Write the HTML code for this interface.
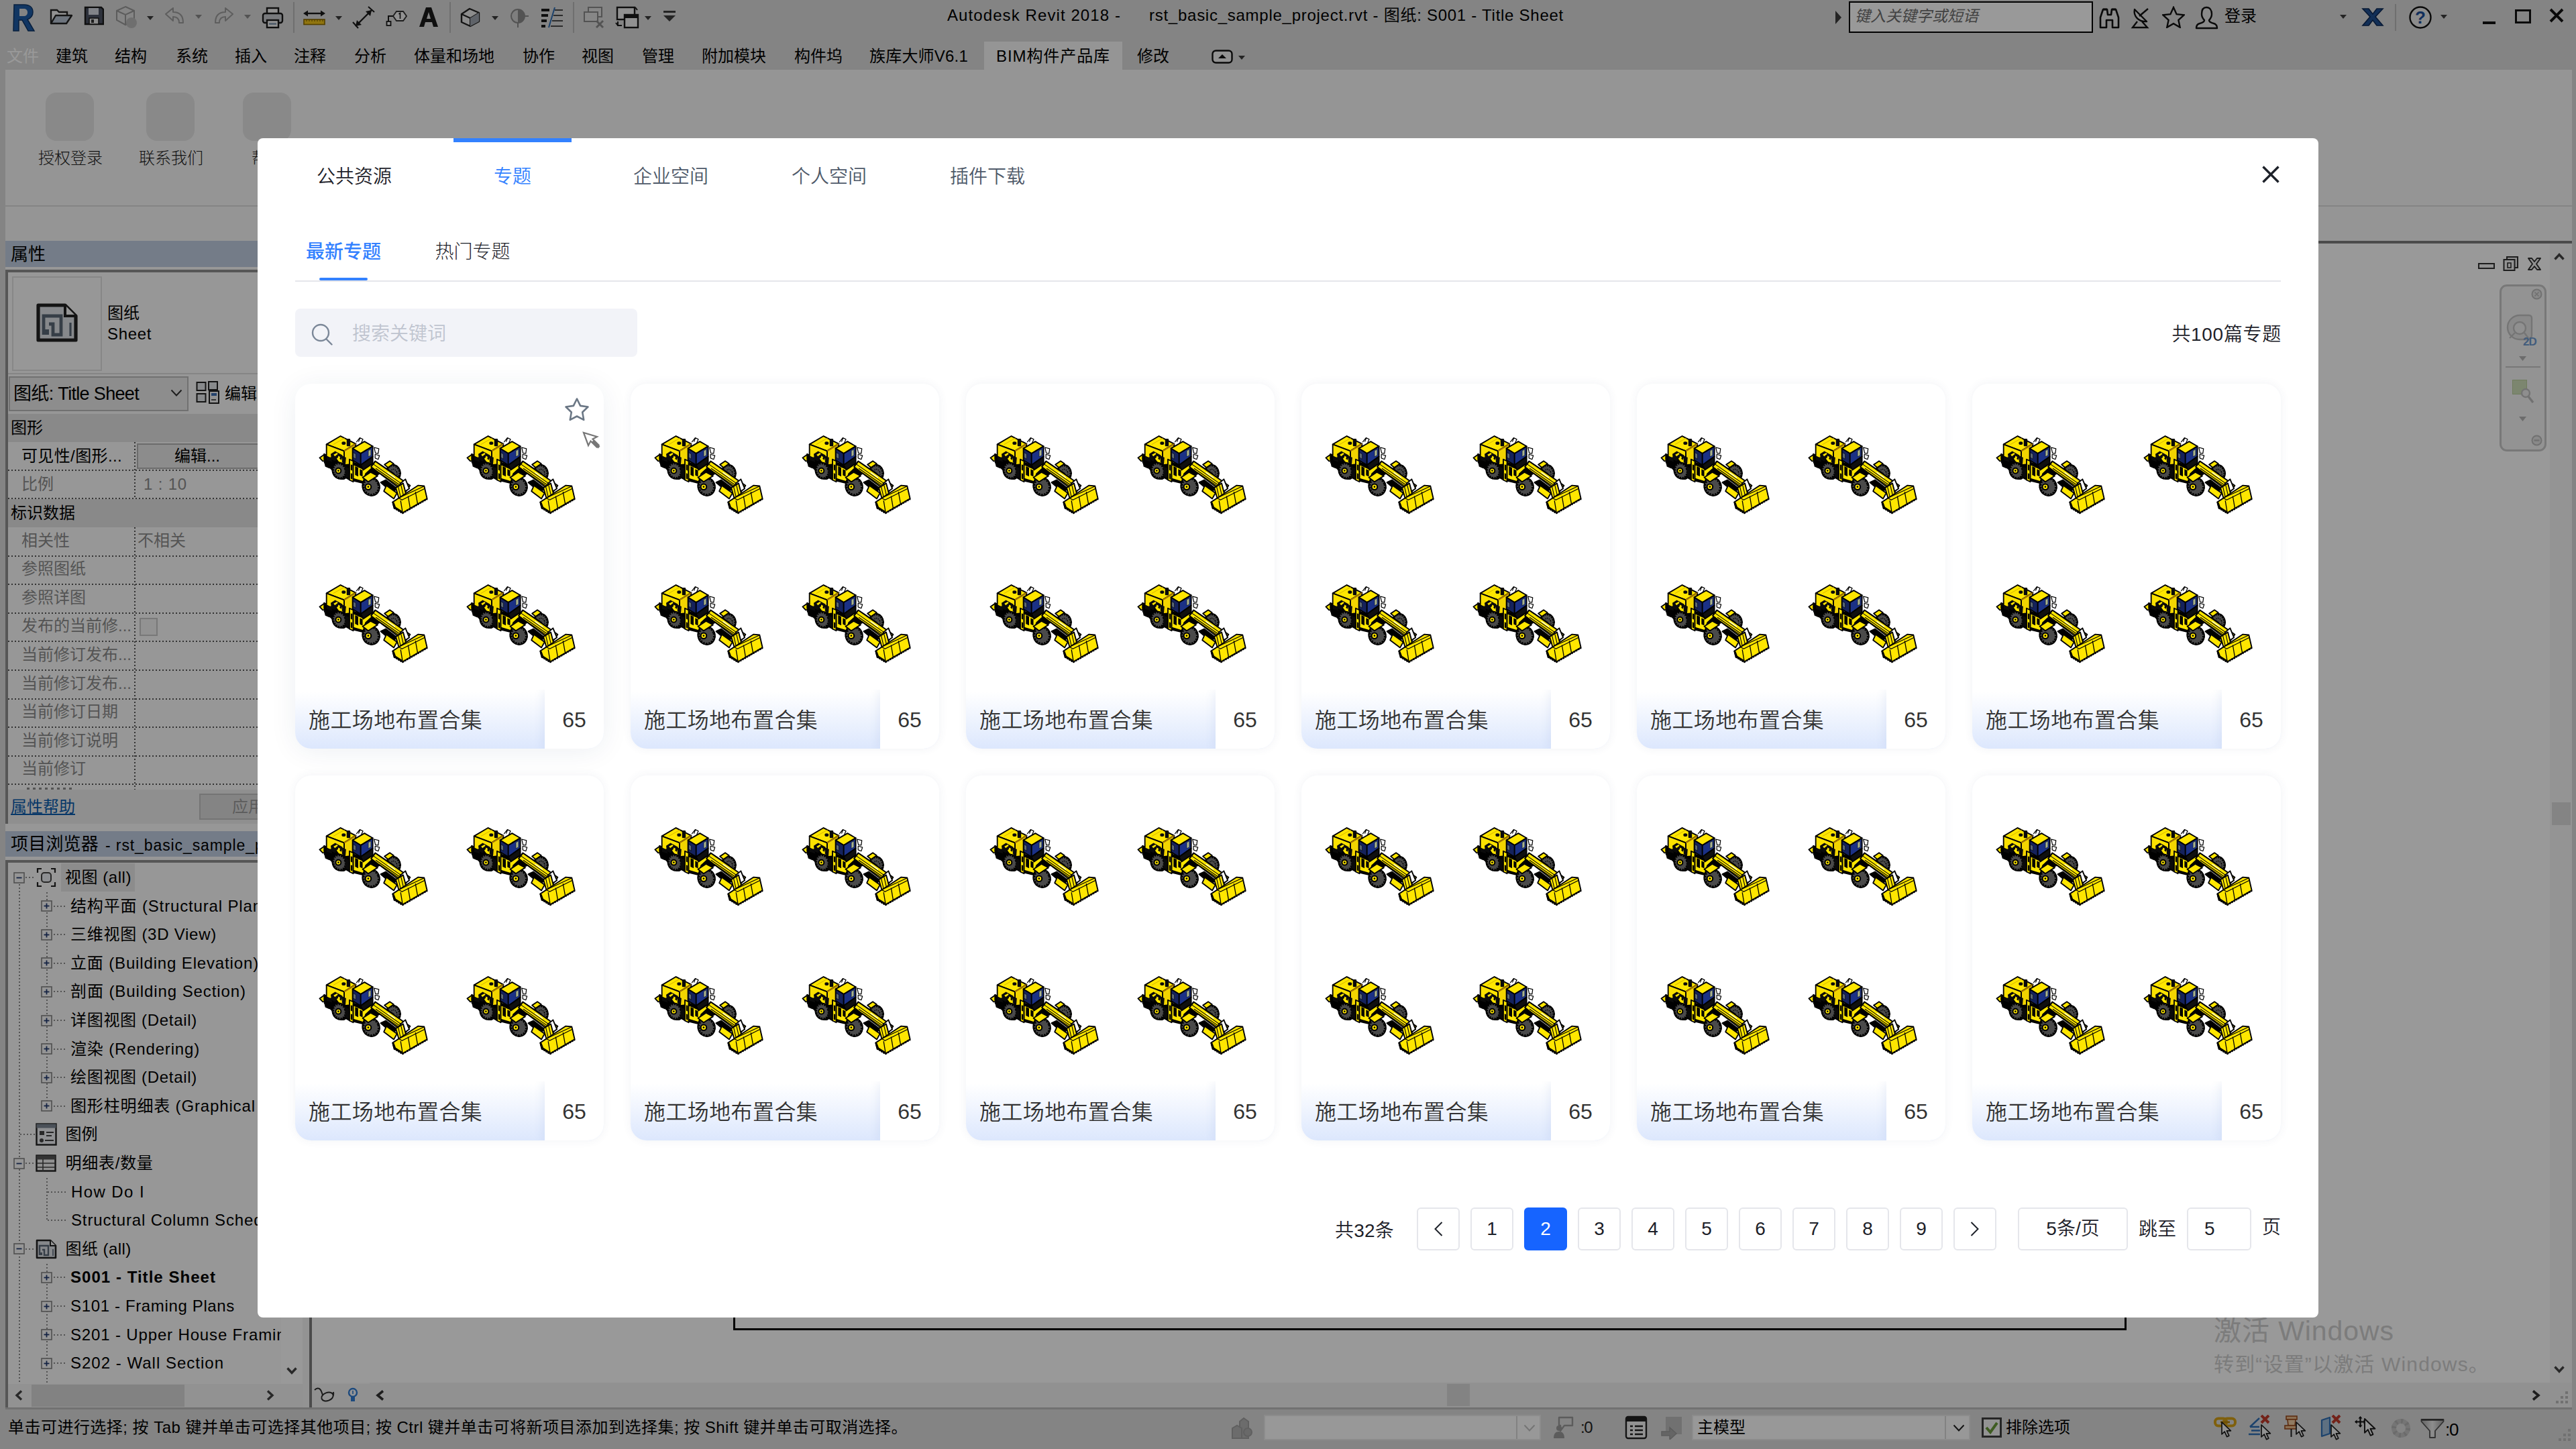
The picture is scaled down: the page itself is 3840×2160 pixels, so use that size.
<!DOCTYPE html>
<html lang="zh-CN"><head><meta charset="utf-8"><title>BIM构件产品库 - 专题</title>
<style>
*{margin:0;padding:0;box-sizing:border-box}
html,body{width:3840px;height:2160px;overflow:hidden;background:#dcdcdc}
body{font-family:"Liberation Sans","Noto Sans CJK SC",sans-serif;position:relative}
.b{position:absolute;display:block}
.t{position:absolute;white-space:nowrap;display:block}
.lat{letter-spacing:.85px}
#app{position:absolute;left:0;top:0;width:3840px;height:2160px;background:#dcdcdc;overflow:hidden}
#mask{position:absolute;left:0;top:0;width:3840px;height:2160px;background:rgba(0,0,0,.4)}
#modal{font-weight:350;position:absolute;left:384px;top:206px;width:3072px;height:1758px;background:#fff;border-radius:8px;overflow:hidden}
.card{position:absolute;width:460px;height:544px;background:#fff;border-radius:24px;box-shadow:0 0 14px rgba(50,70,110,.07)}
.card.hov{box-shadow:0 4px 40px rgba(30,50,90,.075)}
.cf{position:absolute;left:0;top:456px;width:460px;height:88px;border-radius:0 0 24px 24px;overflow:hidden;background:linear-gradient(180deg,#ffffff 4%,#dce7fd 100%)}
.ct{position:absolute;left:20px;top:0;line-height:92px;font-size:32px;color:#333;white-space:nowrap;letter-spacing:.4px}
.cn{position:absolute;left:372px;top:0;width:88px;height:88px;background:#fff;line-height:90px;font-size:32px;color:#333;text-align:center;box-shadow:-4px 0 12px rgba(90,120,190,.09)}
.pg{position:absolute;width:64px;height:64px;border:2px solid #e5e6eb;border-radius:6px;background:#fff;font-size:28px;line-height:60px;text-align:center;color:#1d2129;white-space:nowrap}
.pg.act{background:#1664ff;border-color:#1664ff;color:#fff}
</style></head>
<body>
<div id="app">
<svg class="b" style="left:18px;top:4px;" width="36" height="46" viewBox="0 0 36 46"><path d="M3 3h15c8 0 13 4 13 11c0 6-3 9-8 11l10 17h-9l-9-16h-5v16h-8z M11 9v11h6c4 0 6-2 6-5.500c0-3.500-2-5.500-6-5.500z" fill="#1d5ba5" fill-rule="evenodd"/><path d="M3 3h15c8 0 13 4 13 11c0 6-3 9-8 11l10 17h-9l-9-16h-5v16h-8z" fill="none" stroke="#0e3566" stroke-width="1.500"/></svg>
<svg class="b" style="left:74px;top:12px;" width="34" height="26" viewBox="0 0 34 26"><path d="M2 23V3h9l3 3h12v5" fill="#f4f4f4" stroke="#222" stroke-width="2.400"/><path d="M2 23L9 11h24l-8 12z" fill="#b8c4d2" stroke="#222" stroke-width="2.400" stroke-linejoin="round"/></svg>
<svg class="b" style="left:125px;top:9px;" width="30" height="29" viewBox="0 0 30 29"><path d="M2 2h24l3 3v22H2z" fill="#4b5363" stroke="#1a1a1a" stroke-width="2.400"/><rect x="7" y="3" width="15" height="10" fill="#d7dbe3"/><rect x="8" y="18" width="14" height="9" fill="#e8e8e8" stroke="#1a1a1a" stroke-width="1.500"/><rect x="11" y="20" width="4" height="5" fill="#333"/></svg>
<svg class="b" style="left:171px;top:8px;" width="34" height="36" viewBox="0 0 34 36"><path d="M16 2l13 6v14l-13 7l-13-7V8z" fill="#dedede" stroke="#9a9a9a" stroke-width="2"/><path d="M3 8l13 6l13-6M16 14v15" fill="none" stroke="#9a9a9a" stroke-width="2"/><circle cx="25" cy="26" r="8" fill="#b9b9b9"/></svg>
<svg class="b" style="left:219px;top:24px;" width="10" height="6" viewBox="0 0 10 6"><path d="M0 0H10L5.0 6Z" fill="#3c3c3c"/></svg>
<svg class="b" style="left:245px;top:11px;" width="31" height="25" viewBox="0 0 31 25"><path d="M2 10L13 1v6c10 0 15 5 15 16h-6c0-6-3-9-9-9v6z" fill="#dcdcdc" stroke="#9d9d9d" stroke-width="2" stroke-linejoin="round"/></svg>
<svg class="b" style="left:291px;top:22px;" width="10" height="6" viewBox="0 0 10 6"><path d="M0 0H10L5.0 6Z" fill="#8a8a8a"/></svg>
<svg class="b" style="left:318px;top:11px;" width="31" height="25" viewBox="0 0 31 25"><path d="M29 10L18 1v6C8 7 3 12 3 23h6c0-6 3-9 9-9v6z" fill="#dcdcdc" stroke="#9d9d9d" stroke-width="2" stroke-linejoin="round"/></svg>
<svg class="b" style="left:364px;top:22px;" width="10" height="6" viewBox="0 0 10 6"><path d="M0 0H10L5.0 6Z" fill="#8a8a8a"/></svg>
<svg class="b" style="left:390px;top:10px;" width="33" height="33" viewBox="0 0 33 33"><rect x="8" y="2" width="17" height="10" fill="#f2f2f2" stroke="#1a1a1a" stroke-width="2.400"/><rect x="2" y="10" width="29" height="14" rx="3" fill="#c9ccd1" stroke="#1a1a1a" stroke-width="2.400"/><rect x="8" y="20" width="17" height="11" fill="#f6f6f6" stroke="#1a1a1a" stroke-width="2.400"/><rect x="11" y="24" width="11" height="3" fill="#8fa3b8"/></svg>
<div class="b" style="left:437px;top:3px;width:2px;height:46px;background:#b9b9b9;"></div>
<svg class="b" style="left:451px;top:14px;" width="35" height="24" viewBox="0 0 35 24"><path d="M4 6h27" stroke="#1a1a1a" stroke-width="2.400"/><path d="M1 6l7-4.500v9zM34 6l-7-4.500v9z" fill="#1a1a1a"/><rect x="2" y="15" width="31" height="7.500" fill="#f0c419" stroke="#8a6a00" stroke-width="1.600"/><path d="M6 15v3M10 15v3M14 15v3M18 15v3M22 15v3M26 15v3M30 15v3" stroke="#8a6a00" stroke-width="1.200"/></svg>
<svg class="b" style="left:500px;top:24px;" width="10" height="6" viewBox="0 0 10 6"><path d="M0 0H10L5.0 6Z" fill="#3c3c3c"/></svg>
<svg class="b" style="left:525px;top:9px;" width="35" height="35" viewBox="0 0 35 35"><path d="M5 30L29 6" stroke="#1a1a1a" stroke-width="2.400"/><path d="M5 30l2-9l7 7zM29 6l-2 9l-7-7z" fill="#1a1a1a"/><path d="M1 24l8 9M24 1l9 8" stroke="#1a1a1a" stroke-width="2"/></svg>
<svg class="b" style="left:575px;top:15px;" width="32" height="24" viewBox="0 0 32 24"><path d="M16 2h10l5 7l-5 7H16l-5-7z" fill="#f3f3f3" stroke="#333" stroke-width="1.800"/><path d="M4 18V9h7" fill="none" stroke="#1a1a1a" stroke-width="2"/><rect x="1.500" y="17" width="6" height="6" fill="#f3f3f3" stroke="#1a1a1a" stroke-width="1.800"/><path d="M19.500 6l2-1.500V13" fill="none" stroke="#1a1a1a" stroke-width="1.600"/></svg>
<svg class="b" style="left:624px;top:10px;" width="30" height="31" viewBox="0 0 30 31"><path d="M1 30L11 1h8l10 29h-7l-2-7H10l-2 7z M12 18h6l-3-10z" fill="#1a1a1a" fill-rule="evenodd"/></svg>
<div class="b" style="left:670px;top:3px;width:2px;height:46px;background:#b9b9b9;"></div>
<svg class="b" style="left:685px;top:11px;" width="32" height="30" viewBox="0 0 32 30"><path d="M3 10L15 2l14 6v13l-13 7L3 22z" fill="#e9e9e9" stroke="#222" stroke-width="2.400" stroke-linejoin="round"/><path d="M3 10l13 6l13-8M16 16v12" fill="none" stroke="#222" stroke-width="2"/><path d="M16 16l13-8v13l-13 7z" fill="#9fa6b0"/></svg>
<svg class="b" style="left:733px;top:24px;" width="10" height="6" viewBox="0 0 10 6"><path d="M0 0H10L5.0 6Z" fill="#3c3c3c"/></svg>
<svg class="b" style="left:759px;top:12px;" width="30" height="30" viewBox="0 0 30 30"><circle cx="13" cy="12" r="10" fill="#d3d3d3" stroke="#8b8b8b" stroke-width="2"/><path d="M13 2a10 10 0 0 1 0 20z" fill="#8b8b8b"/><path d="M23 12l6 0M13 22v7" stroke="#8b8b8b" stroke-width="2"/></svg>
<svg class="b" style="left:805px;top:10px;" width="36" height="32" viewBox="0 0 36 32"><path d="M2 5h12M2 13h10M2 21h8M2 29h6" stroke="#1a1a1a" stroke-width="4"/><path d="M22 5h12M20 13h14M18 21h16M16 29h18" stroke="#1a1a1a" stroke-width="1.600"/><path d="M22 1L13 31" stroke="#2f6fb5" stroke-width="2"/></svg>
<div class="b" style="left:854px;top:3px;width:2px;height:46px;background:#b9b9b9;"></div>
<svg class="b" style="left:869px;top:9px;" width="36" height="34" viewBox="0 0 36 34"><rect x="8" y="2" width="20" height="14" fill="#e2e2e2" stroke="#8b8b8b" stroke-width="2"/><rect x="2" y="9" width="20" height="14" fill="#e2e2e2" stroke="#8b8b8b" stroke-width="2"/><path d="M20 22l10 10M30 22L20 32" stroke="#8b8b8b" stroke-width="3"/></svg>
<svg class="b" style="left:917px;top:8px;" width="36" height="36" viewBox="0 0 36 36"><rect x="3" y="3" width="26" height="18" fill="#f2f2f2" stroke="#1a1a1a" stroke-width="2.400"/><rect x="14" y="14" width="20" height="19" fill="#f2f2f2" stroke="#1a1a1a" stroke-width="2.400"/><rect x="14" y="14" width="20" height="5" fill="#1a1a1a"/><path d="M4 24v6h6M4 30l-3-4M30 3l3 4" stroke="#1a1a1a" stroke-width="2" fill="none"/></svg>
<svg class="b" style="left:961px;top:24px;" width="10" height="6" viewBox="0 0 10 6"><path d="M0 0H10L5.0 6Z" fill="#3c3c3c"/></svg>
<svg class="b" style="left:988px;top:16px;" width="20" height="16" viewBox="0 0 20 16"><rect x="1" y="0" width="18" height="3" fill="#3c3c3c"/><path d="M1 7h18l-9 9z" fill="#3c3c3c"/></svg>
<span class="t" style="top:6px;font-size:24px;line-height:34px;color:#000;left:1412px;letter-spacing:1.089px;">Autodesk Revit 2018 -</span>
<span class="t" style="top:6px;font-size:24px;line-height:34px;color:#000;left:1713px;letter-spacing:0.738px;">rst_basic_sample_project.rvt - 图纸: S001 - Title Sheet</span>
<svg class="b" style="left:2735px;top:16px;" width="12" height="20" viewBox="0 0 12 20"><path d="M1 0l9 10l-9 10z" fill="#3c3c3c"/></svg>
<div class="b" style="left:2756px;top:2px;width:364px;height:47px;background:#fff;border:2px solid #000;box-sizing:border-box;"></div>
<span class="t" style="top:8px;font-size:23px;line-height:32px;color:#6f6f6f;left:2765px;font-style:italic;">键入关键字或短语</span>
<svg class="b" style="left:3128px;top:10px;" width="33" height="33" viewBox="0 0 33 33"><path d="M3 31V16l4-12h6l1 8h5l1-8h6l4 12v15h-9V20h-9v11z" fill="#e6e6e6" stroke="#111" stroke-width="2.600" stroke-linejoin="round"/><path d="M7 4h6M20 4h6" stroke="#111" stroke-width="3"/></svg>
<svg class="b" style="left:3176px;top:10px;" width="32" height="33" viewBox="0 0 32 33"><path d="M6 4c-2 10 6 19 18 18z" fill="#e6e6e6" stroke="#111" stroke-width="2.400" stroke-linejoin="round"/><path d="M13 14L26 3M10 22L3 31h22l-8-9" fill="none" stroke="#111" stroke-width="2.400"/></svg>
<svg class="b" style="left:3223px;top:9px;" width="34" height="33" viewBox="0 0 34 33"><path d="M17 2l4.600 10.200l11 1.200l-8.200 7.500l2.300 10.900L17 26.200l-9.700 5.600l2.300-10.900L1.400 13.400l11-1.200z" fill="none" stroke="#111" stroke-width="2.400" stroke-linejoin="miter"/></svg>
<svg class="b" style="left:3272px;top:9px;" width="35" height="35" viewBox="0 0 35 35"><path d="M17 2c5 0 8 4 8 10c0 4-2 7-4 9c0 3 3 4 7 5c4 1 5 3 5 7H2c0-4 1-6 5-7c4-1 7-2 7-5c-2-2-4-5-4-9c0-6 2-10 7-10z" fill="#e6e6e6" stroke="#111" stroke-width="2.400" stroke-linejoin="round"/></svg>
<span class="t" style="top:7px;font-size:24px;line-height:34px;color:#000;left:3316px;">登录</span>
<svg class="b" style="left:3488px;top:22px;" width="10" height="6" viewBox="0 0 10 6"><path d="M0 0H10L5.0 6Z" fill="#3c3c3c"/></svg>
<svg class="b" style="left:3520px;top:10px;" width="34" height="30" viewBox="0 0 34 30"><path d="M2 3h9l6 8l6-8h9L21 15l11 13h-9l-6-8l-6 8H2l11-13z" fill="#1f4f91" stroke="#0d2a57" stroke-width="1.600"/></svg>
<div class="b" style="left:3570px;top:6px;width:2px;height:40px;background:#b9b9b9;"></div>
<svg class="b" style="left:3590px;top:8px;" width="36" height="36" viewBox="0 0 36 36"><circle cx="18" cy="18" r="15.500" fill="#e9e9e9" stroke="#111" stroke-width="2.400"/></svg>
<span class="t" style="top:8px;font-size:26px;line-height:36px;color:#1d4f9a;left:2608px;width:2000px;text-align:center;font-weight:700;">?</span>
<svg class="b" style="left:3638px;top:22px;" width="10" height="6" viewBox="0 0 10 6"><path d="M0 0H10L5.0 6Z" fill="#3c3c3c"/></svg>
<div class="b" style="left:3701px;top:32px;width:19px;height:4px;background:#111;"></div>
<div class="b" style="left:3749px;top:14px;width:24px;height:21px;border:3px solid #111;box-sizing:border-box;"></div>
<svg class="b" style="left:3800px;top:12px;" width="22" height="22" viewBox="0 0 22 22"><path d="M2 2l18 18M20 2L2 20" stroke="#111" stroke-width="4"/></svg>
<span class="t" style="top:67px;font-size:24px;line-height:34px;color:#fff;left:10px;">文件</span>
<span class="t" style="top:67px;font-size:24px;line-height:34px;color:#000;left:83px;">建筑</span>
<span class="t" style="top:67px;font-size:24px;line-height:34px;color:#000;left:171px;">结构</span>
<span class="t" style="top:67px;font-size:24px;line-height:34px;color:#000;left:262px;">系统</span>
<span class="t" style="top:67px;font-size:24px;line-height:34px;color:#000;left:350px;">插入</span>
<span class="t" style="top:67px;font-size:24px;line-height:34px;color:#000;left:438px;">注释</span>
<span class="t" style="top:67px;font-size:24px;line-height:34px;color:#000;left:528px;">分析</span>
<span class="t" style="top:67px;font-size:24px;line-height:34px;color:#000;left:617px;">体量和场地</span>
<span class="t" style="top:67px;font-size:24px;line-height:34px;color:#000;left:779px;">协作</span>
<span class="t" style="top:67px;font-size:24px;line-height:34px;color:#000;left:867px;">视图</span>
<span class="t" style="top:67px;font-size:24px;line-height:34px;color:#000;left:957px;">管理</span>
<span class="t" style="top:67px;font-size:24px;line-height:34px;color:#000;left:1046px;">附加模块</span>
<span class="t" style="top:67px;font-size:24px;line-height:34px;color:#000;left:1184px;">构件坞</span>
<span class="t" style="top:67px;font-size:24px;line-height:34px;color:#000;left:1296px;letter-spacing:0.203px;">族库大师V6.1</span>
<div class="b" style="left:1467px;top:62px;width:206px;height:42px;background:#f9f9f9;"></div>
<span class="t" style="top:67px;font-size:24px;line-height:34px;color:#000;left:1485px;letter-spacing:0.916px;">BIM构件产品库</span>
<span class="t" style="top:67px;font-size:24px;line-height:34px;color:#000;left:1695px;">修改</span>
<svg class="b" style="left:1806px;top:74px;" width="32" height="22" viewBox="0 0 32 22"><rect x="1.500" y="1.500" width="29" height="18" rx="5" fill="#f3f3f3" stroke="#111" stroke-width="2.400"/><path d="M10 13h12l-6-6z" fill="#111"/></svg>
<svg class="b" style="left:1846px;top:83px;" width="10" height="6" viewBox="0 0 10 6"><path d="M0 0H10L5.0 6Z" fill="#3c3c3c"/></svg>
<div class="b" style="left:8px;top:104px;width:3826px;height:255px;background:#f9f9f9;"></div>
<div class="b" style="left:8px;top:306px;width:3826px;height:2px;background:#dcdcdc;"></div>
<div class="b" style="left:68px;top:138px;width:72px;height:72px;background:#e4e4e4;border-radius:16px;"></div>
<span class="t" style="top:219px;font-size:24px;line-height:34px;color:#1e1e1e;left:57px;font-weight:300;">授权登录</span>
<div class="b" style="left:218px;top:138px;width:72px;height:72px;background:#e4e4e4;border-radius:16px;"></div>
<span class="t" style="top:219px;font-size:24px;line-height:34px;color:#1e1e1e;left:207px;font-weight:300;">联系我们</span>
<div class="b" style="left:362px;top:138px;width:72px;height:72px;background:#e4e4e4;border-radius:16px;"></div>
<span class="t" style="top:219px;font-size:24px;line-height:34px;color:#1e1e1e;left:375px;font-weight:300;">帮助</span>
<div class="b" style="left:8px;top:359px;width:453px;height:1739px;background:#fcfcfc;"></div>
<div class="b" style="left:451px;top:359px;width:10px;height:1739px;background:#f5f5f5;"></div>
<div class="b" style="left:8px;top:359px;width:453px;height:39px;background:#c1cfe3;"></div>
<span class="t" style="top:361px;font-size:26px;line-height:36px;color:#000;left:16px;">属性</span>
<div class="b" style="left:8px;top:402px;width:453px;height:826px;border-left:4px solid #8f8f8f;border-top:4px solid #8f8f8f;box-sizing:border-box;"></div>
<div class="b" style="left:18px;top:412px;width:134px;height:141px;border:2px solid #e2e2e2;box-sizing:border-box;"></div>
<svg class="b" style="left:53px;top:451px;" width="64" height="60" viewBox="0 0 32 30"><path d="M2 2h20l8 8v18H2z" fill="#dfe3e8" stroke="#222" stroke-width="2.600" stroke-linejoin="round"/><path d="M22 2v8h8" fill="#f8f8f8" stroke="#222" stroke-width="2"/><path d="M6 24V10h13v14h-6v-8h-3" fill="none" stroke="#5b6877" stroke-width="2.400"/><rect x="6" y="20" width="4" height="4" fill="#5b6877"/><path d="M26 15v10" stroke="#5b6877" stroke-width="1.600"/></svg>
<span class="t" style="top:450px;font-size:24px;line-height:34px;color:#000;left:160px;">图纸</span>
<span class="t" style="top:481px;font-size:24px;line-height:34px;color:#000;left:160px;letter-spacing:0.656px;">Sheet</span>
<div class="b" style="left:12px;top:556px;width:449px;height:2px;background:#dedede;"></div>
<div class="b" style="left:13px;top:561px;width:268px;height:52px;background:#ececec;border:2px solid #bdbdbd;box-sizing:border-box;"></div>
<span class="t" style="top:568px;font-size:27px;line-height:38px;color:#000;left:20px;letter-spacing:-0.672px;">图纸: Title Sheet</span>
<svg class="b" style="left:254px;top:580px;" width="18" height="12" viewBox="0 0 18 12"><path d="M1.500 1.500l7.500 8l7.500-8" fill="none" stroke="#333" stroke-width="2"/></svg>
<svg class="b" style="left:292px;top:567px;" width="36" height="36" viewBox="0 0 36 36"><rect x="1.500" y="3" width="13" height="12" fill="#e3e6ea" stroke="#222" stroke-width="2"/><rect x="1.500" y="20" width="13" height="12" fill="#e3e6ea" stroke="#222" stroke-width="2"/><rect x="19" y="2" width="13" height="12" fill="#e3e6ea" stroke="#222" stroke-width="2"/><rect x="20" y="16" width="14" height="18" fill="#f6f6f6" stroke="#222" stroke-width="2"/><rect x="23" y="19" width="8" height="4" fill="#3c6fb4"/><path d="M23 29h7" stroke="#222" stroke-width="1.500"/></svg>
<span class="t" style="top:570px;font-size:24px;line-height:34px;color:#000;left:335px;">编辑类型</span>
<div class="b" style="left:12px;top:617px;width:449px;height:42px;background:#e4e4e4;"></div>
<span class="t" style="top:621px;font-size:24px;line-height:34px;color:#000;left:16px;">图形</span>
<span class="t" style="top:663px;font-size:24px;line-height:34px;color:#000;left:32px;letter-spacing:0.370px;">可见性/图形...</span>
<div class="b" style="left:204px;top:661px;width:257px;height:38px;background:#e9e9e9;border:2px solid #b4b4b4;box-sizing:border-box;"></div>
<span class="t" style="top:663px;font-size:24px;line-height:34px;color:#000;left:260px;">编辑...</span>
<div class="b" style="left:12px;top:700px;width:449px;height:2px;background-image:repeating-linear-gradient(90deg,#555 0 2px,transparent 2px 5px);"></div>
<span class="t" style="top:705px;font-size:24px;line-height:34px;color:#8c8c8c;left:32px;">比例</span>
<span class="t" style="top:705px;font-size:24px;line-height:34px;color:#8c8c8c;left:214px;letter-spacing:0.826px;">1 : 10</span>
<div class="b" style="left:12px;top:742px;width:449px;height:2px;background-image:repeating-linear-gradient(90deg,#555 0 2px,transparent 2px 5px);"></div>
<div class="b" style="left:200px;top:659px;width:2px;height:84px;background-image:repeating-linear-gradient(180deg,#555 0 2px,transparent 2px 5px);"></div>
<div class="b" style="left:12px;top:744px;width:449px;height:42px;background:#e4e4e4;"></div>
<span class="t" style="top:748px;font-size:24px;line-height:34px;color:#000;left:16px;">标识数据</span>
<span class="t" style="top:788.5px;font-size:24px;line-height:34px;color:#8c8c8c;left:32px;">相关性</span>
<div class="b" style="left:12px;top:827.5px;width:449px;height:2px;background-image:repeating-linear-gradient(90deg,#555 0 2px,transparent 2px 5px);"></div>
<span class="t" style="top:831.1px;font-size:24px;line-height:34px;color:#8c8c8c;left:32px;">参照图纸</span>
<div class="b" style="left:12px;top:870.1px;width:449px;height:2px;background-image:repeating-linear-gradient(90deg,#555 0 2px,transparent 2px 5px);"></div>
<span class="t" style="top:873.7px;font-size:24px;line-height:34px;color:#8c8c8c;left:32px;">参照详图</span>
<div class="b" style="left:12px;top:912.7px;width:449px;height:2px;background-image:repeating-linear-gradient(90deg,#555 0 2px,transparent 2px 5px);"></div>
<span class="t" style="top:916.3px;font-size:24px;line-height:34px;color:#8c8c8c;left:32px;">发布的当前修...</span>
<div class="b" style="left:12px;top:955.3px;width:449px;height:2px;background-image:repeating-linear-gradient(90deg,#555 0 2px,transparent 2px 5px);"></div>
<span class="t" style="top:958.9px;font-size:24px;line-height:34px;color:#8c8c8c;left:32px;">当前修订发布...</span>
<div class="b" style="left:12px;top:997.9px;width:449px;height:2px;background-image:repeating-linear-gradient(90deg,#555 0 2px,transparent 2px 5px);"></div>
<span class="t" style="top:1001.5px;font-size:24px;line-height:34px;color:#8c8c8c;left:32px;">当前修订发布...</span>
<div class="b" style="left:12px;top:1040.5px;width:449px;height:2px;background-image:repeating-linear-gradient(90deg,#555 0 2px,transparent 2px 5px);"></div>
<span class="t" style="top:1044.1px;font-size:24px;line-height:34px;color:#8c8c8c;left:32px;">当前修订日期</span>
<div class="b" style="left:12px;top:1083.1px;width:449px;height:2px;background-image:repeating-linear-gradient(90deg,#555 0 2px,transparent 2px 5px);"></div>
<span class="t" style="top:1086.7px;font-size:24px;line-height:34px;color:#8c8c8c;left:32px;">当前修订说明</span>
<div class="b" style="left:12px;top:1125.7px;width:449px;height:2px;background-image:repeating-linear-gradient(90deg,#555 0 2px,transparent 2px 5px);"></div>
<span class="t" style="top:1129.3px;font-size:24px;line-height:34px;color:#8c8c8c;left:32px;">当前修订</span>
<div class="b" style="left:12px;top:1168.3px;width:449px;height:2px;background-image:repeating-linear-gradient(90deg,#555 0 2px,transparent 2px 5px);"></div>
<span class="t" style="top:788.5px;font-size:24px;line-height:34px;color:#8c8c8c;left:205px;">不相关</span>
<div class="b" style="left:208px;top:921px;width:27px;height:27px;background:#f4f4f4;border:2px solid #c9c9c9;box-sizing:border-box;"></div>
<div class="b" style="left:200px;top:786px;width:2px;height:392px;background-image:repeating-linear-gradient(180deg,#555 0 2px,transparent 2px 5px);"></div>
<div class="b" style="left:40px;top:1174px;width:70px;height:3px;background-image:repeating-linear-gradient(90deg,#8c8c8c 0 4px,transparent 4px 9px);"></div>
<div class="b" style="left:12px;top:1177px;width:449px;height:51px;background:#efefef;"></div>
<span class="t" style="top:1186px;font-size:24px;line-height:34px;color:#0b5cad;left:16px;text-decoration:underline;">属性帮助</span>
<div class="b" style="left:297px;top:1183px;width:164px;height:39px;background:#dddddd;border:2px solid #c2c2c2;box-sizing:border-box;"></div>
<span class="t" style="top:1186px;font-size:24px;line-height:34px;color:#9a9a9a;left:346px;">应用</span>
<div class="b" style="left:8px;top:1239px;width:453px;height:38px;background:#c1cfe3;"></div>
<span class="t" style="top:1240px;font-size:26px;line-height:36px;color:#000;left:16px;letter-spacing:0.197px;">项目浏览器</span>
<span class="t" style="top:1244px;font-size:23px;line-height:32px;color:#000;left:157px;letter-spacing:.9px;">- rst_basic_sample_project.rvt</span>
<div class="b" style="left:8px;top:1282px;width:453px;height:816px;border-left:4px solid #8f8f8f;border-top:4px solid #8f8f8f;box-sizing:border-box;"></div>
<div class="b" style="left:0;top:1286px;width:419px;height:777px;overflow:hidden;"><div class="b" style="left:0;top:-1286px;"><div class="b" style="left:91px;top:1287px;width:110px;height:42px;background:#e9e9e9;"></div>
<div class="b" style="left:28px;top:1318px;width:2px;height:853.8px;background-image:repeating-linear-gradient(180deg,#8a8a8a 0 2px,transparent 2px 5px);"></div>
<div class="b" style="left:69px;top:1330px;width:2px;height:318.8px;background-image:repeating-linear-gradient(180deg,#8a8a8a 0 2px,transparent 2px 5px);"></div>
<div class="b" style="left:69px;top:1756px;width:2px;height:63.2px;background-image:repeating-linear-gradient(180deg,#8a8a8a 0 2px,transparent 2px 5px);"></div>
<div class="b" style="left:69px;top:1883.8px;width:2px;height:300px;background-image:repeating-linear-gradient(180deg,#8a8a8a 0 2px,transparent 2px 5px);"></div>
<svg class="b" style="left:20px;top:1299.5px;" width="17" height="17" viewBox="0 0 17 17"><rect x="1" y="1" width="15" height="15" fill="#f9f9f9" stroke="#848484" stroke-width="1.600"/><path d="M4.500 8.500h8" stroke="#223a70" stroke-width="1.800"/></svg>
<div class="b" style="left:38px;top:1307px;width:14px;height:2px;background-image:repeating-linear-gradient(90deg,#8a8a8a 0 2px,transparent 2px 5px);"></div>
<svg class="b" style="left:54px;top:1293px;" width="30" height="30" viewBox="0 0 30 30"><path d="M2 8V2h6M22 2h6v6M28 22v6h-6M8 28H2v-6" fill="none" stroke="#222" stroke-width="2.200"/><rect x="8" y="8" width="14" height="14" rx="4" fill="#eceff3" stroke="#444" stroke-width="2"/></svg>
<span class="t" style="top:1291px;font-size:24px;line-height:34px;color:#000;left:97px;letter-spacing:0.541px;">视图 (all)</span>
<svg class="b" style="left:61px;top:1342.1px;" width="17" height="17" viewBox="0 0 17 17"><rect x="1" y="1" width="15" height="15" fill="#f9f9f9" stroke="#848484" stroke-width="1.600"/><path d="M4.500 8.500h8" stroke="#223a70" stroke-width="1.800"/><path d="M8.500 4.500v8" stroke="#223a70" stroke-width="1.800"/></svg>
<div class="b" style="left:80px;top:1349.6px;width:18px;height:2px;background-image:repeating-linear-gradient(90deg,#8a8a8a 0 2px,transparent 2px 5px);"></div>
<span class="t lat" style="top:1333.6px;font-size:24px;line-height:34px;color:#000;left:105px;">结构平面 (Structural Plan)</span>
<svg class="b" style="left:61px;top:1384.7px;" width="17" height="17" viewBox="0 0 17 17"><rect x="1" y="1" width="15" height="15" fill="#f9f9f9" stroke="#848484" stroke-width="1.600"/><path d="M4.500 8.500h8" stroke="#223a70" stroke-width="1.800"/><path d="M8.500 4.500v8" stroke="#223a70" stroke-width="1.800"/></svg>
<div class="b" style="left:80px;top:1392.2px;width:18px;height:2px;background-image:repeating-linear-gradient(90deg,#8a8a8a 0 2px,transparent 2px 5px);"></div>
<span class="t" style="top:1376.2px;font-size:24px;line-height:34px;color:#000;left:105px;letter-spacing:0.743px;">三维视图 (3D View)</span>
<svg class="b" style="left:61px;top:1427.3px;" width="17" height="17" viewBox="0 0 17 17"><rect x="1" y="1" width="15" height="15" fill="#f9f9f9" stroke="#848484" stroke-width="1.600"/><path d="M4.500 8.500h8" stroke="#223a70" stroke-width="1.800"/><path d="M8.500 4.500v8" stroke="#223a70" stroke-width="1.800"/></svg>
<div class="b" style="left:80px;top:1434.8px;width:18px;height:2px;background-image:repeating-linear-gradient(90deg,#8a8a8a 0 2px,transparent 2px 5px);"></div>
<span class="t lat" style="top:1418.8px;font-size:24px;line-height:34px;color:#000;left:105px;">立面 (Building Elevation)</span>
<svg class="b" style="left:61px;top:1469.9px;" width="17" height="17" viewBox="0 0 17 17"><rect x="1" y="1" width="15" height="15" fill="#f9f9f9" stroke="#848484" stroke-width="1.600"/><path d="M4.500 8.500h8" stroke="#223a70" stroke-width="1.800"/><path d="M8.500 4.500v8" stroke="#223a70" stroke-width="1.800"/></svg>
<div class="b" style="left:80px;top:1477.4px;width:18px;height:2px;background-image:repeating-linear-gradient(90deg,#8a8a8a 0 2px,transparent 2px 5px);"></div>
<span class="t" style="top:1461.4px;font-size:24px;line-height:34px;color:#000;left:105px;letter-spacing:0.916px;">剖面 (Building Section)</span>
<svg class="b" style="left:61px;top:1512.5px;" width="17" height="17" viewBox="0 0 17 17"><rect x="1" y="1" width="15" height="15" fill="#f9f9f9" stroke="#848484" stroke-width="1.600"/><path d="M4.500 8.500h8" stroke="#223a70" stroke-width="1.800"/><path d="M8.500 4.500v8" stroke="#223a70" stroke-width="1.800"/></svg>
<div class="b" style="left:80px;top:1520px;width:18px;height:2px;background-image:repeating-linear-gradient(90deg,#8a8a8a 0 2px,transparent 2px 5px);"></div>
<span class="t" style="top:1504px;font-size:24px;line-height:34px;color:#000;left:105px;letter-spacing:0.691px;">详图视图 (Detail)</span>
<svg class="b" style="left:61px;top:1555.1px;" width="17" height="17" viewBox="0 0 17 17"><rect x="1" y="1" width="15" height="15" fill="#f9f9f9" stroke="#848484" stroke-width="1.600"/><path d="M4.500 8.500h8" stroke="#223a70" stroke-width="1.800"/><path d="M8.500 4.500v8" stroke="#223a70" stroke-width="1.800"/></svg>
<div class="b" style="left:80px;top:1562.6px;width:18px;height:2px;background-image:repeating-linear-gradient(90deg,#8a8a8a 0 2px,transparent 2px 5px);"></div>
<span class="t" style="top:1546.6px;font-size:24px;line-height:34px;color:#000;left:105px;letter-spacing:0.828px;">渲染 (Rendering)</span>
<svg class="b" style="left:61px;top:1597.7px;" width="17" height="17" viewBox="0 0 17 17"><rect x="1" y="1" width="15" height="15" fill="#f9f9f9" stroke="#848484" stroke-width="1.600"/><path d="M4.500 8.500h8" stroke="#223a70" stroke-width="1.800"/><path d="M8.500 4.500v8" stroke="#223a70" stroke-width="1.800"/></svg>
<div class="b" style="left:80px;top:1605.2px;width:18px;height:2px;background-image:repeating-linear-gradient(90deg,#8a8a8a 0 2px,transparent 2px 5px);"></div>
<span class="t" style="top:1589.2px;font-size:24px;line-height:34px;color:#000;left:105px;letter-spacing:0.691px;">绘图视图 (Detail)</span>
<svg class="b" style="left:61px;top:1640.3px;" width="17" height="17" viewBox="0 0 17 17"><rect x="1" y="1" width="15" height="15" fill="#f9f9f9" stroke="#848484" stroke-width="1.600"/><path d="M4.500 8.500h8" stroke="#223a70" stroke-width="1.800"/><path d="M8.500 4.500v8" stroke="#223a70" stroke-width="1.800"/></svg>
<div class="b" style="left:80px;top:1647.8px;width:18px;height:2px;background-image:repeating-linear-gradient(90deg,#8a8a8a 0 2px,transparent 2px 5px);"></div>
<span class="t lat" style="top:1631.8px;font-size:24px;line-height:34px;color:#000;left:105px;">图形柱明细表 (Graphical Column Schedule)</span>
<div class="b" style="left:30px;top:1690.4px;width:22px;height:2px;background-image:repeating-linear-gradient(90deg,#8a8a8a 0 2px,transparent 2px 5px);"></div>
<svg class="b" style="left:53px;top:1674.4px;" width="32" height="34" viewBox="0 0 32 34"><rect x="1.500" y="1.500" width="29" height="31" fill="#eef0f3" stroke="#222" stroke-width="2.400"/><rect x="1.500" y="1.500" width="29" height="6" fill="#7d8794"/><rect x="6" y="12" width="7" height="6" fill="#444"/><path d="M16 14h11M16 19h8M14 26h13" stroke="#444" stroke-width="2"/><circle cx="9" cy="26" r="3" fill="#444"/></svg>
<span class="t" style="top:1674.4px;font-size:24px;line-height:34px;color:#000;left:97.6px;">图例</span>
<svg class="b" style="left:20px;top:1725.5px;" width="17" height="17" viewBox="0 0 17 17"><rect x="1" y="1" width="15" height="15" fill="#f9f9f9" stroke="#848484" stroke-width="1.600"/><path d="M4.500 8.500h8" stroke="#223a70" stroke-width="1.800"/></svg>
<div class="b" style="left:38px;top:1733px;width:14px;height:2px;background-image:repeating-linear-gradient(90deg,#8a8a8a 0 2px,transparent 2px 5px);"></div>
<svg class="b" style="left:53px;top:1721px;" width="31" height="26" viewBox="0 0 31 26"><rect x="1.500" y="1.500" width="28" height="23" fill="#f1f1f1" stroke="#222" stroke-width="2.400"/><rect x="1.500" y="1.500" width="28" height="6" fill="#555"/><path d="M2 13h27M2 19h27M11 7v18" stroke="#444" stroke-width="1.600"/></svg>
<span class="t" style="top:1717px;font-size:24px;line-height:34px;color:#000;left:97.6px;letter-spacing:0.721px;">明细表/数量</span>
<div class="b" style="left:71px;top:1775.6px;width:28px;height:2px;background-image:repeating-linear-gradient(90deg,#8a8a8a 0 2px,transparent 2px 5px);"></div>
<span class="t" style="top:1759.6px;font-size:24px;line-height:34px;color:#000;left:106px;letter-spacing:1.412px;">How Do I</span>
<div class="b" style="left:71px;top:1818.2px;width:28px;height:2px;background-image:repeating-linear-gradient(90deg,#8a8a8a 0 2px,transparent 2px 5px);"></div>
<span class="t lat" style="top:1802.2px;font-size:24px;line-height:34px;color:#000;left:106px;">Structural Column Schedule</span>
<svg class="b" style="left:20px;top:1853.3px;" width="17" height="17" viewBox="0 0 17 17"><rect x="1" y="1" width="15" height="15" fill="#f9f9f9" stroke="#848484" stroke-width="1.600"/><path d="M4.500 8.500h8" stroke="#223a70" stroke-width="1.800"/></svg>
<div class="b" style="left:38px;top:1860.8px;width:14px;height:2px;background-image:repeating-linear-gradient(90deg,#8a8a8a 0 2px,transparent 2px 5px);"></div>
<svg class="b" style="left:53px;top:1846.8px;" width="32" height="30" viewBox="0 0 32 30"><path d="M2 2h20l8 8v18H2z" fill="#dfe3e8" stroke="#222" stroke-width="2.600" stroke-linejoin="round"/><path d="M22 2v8h8" fill="#f8f8f8" stroke="#222" stroke-width="2"/><path d="M6 24V10h13v14h-6v-8h-3" fill="none" stroke="#5b6877" stroke-width="2.400"/><rect x="6" y="20" width="4" height="4" fill="#5b6877"/><path d="M26 15v10" stroke="#5b6877" stroke-width="1.600"/></svg>
<span class="t" style="top:1844.8px;font-size:24px;line-height:34px;color:#000;left:97.6px;letter-spacing:0.416px;">图纸 (all)</span>
<svg class="b" style="left:61px;top:1895.9px;" width="17" height="17" viewBox="0 0 17 17"><rect x="1" y="1" width="15" height="15" fill="#f9f9f9" stroke="#848484" stroke-width="1.600"/><path d="M4.500 8.500h8" stroke="#223a70" stroke-width="1.800"/><path d="M8.500 4.500v8" stroke="#223a70" stroke-width="1.800"/></svg>
<div class="b" style="left:80px;top:1903.4px;width:18px;height:2px;background-image:repeating-linear-gradient(90deg,#8a8a8a 0 2px,transparent 2px 5px);"></div>
<span class="t" style="top:1887.4px;font-size:24px;line-height:34px;color:#000;left:105px;font-weight:700;letter-spacing:1.038px;">S001 - Title Sheet</span>
<svg class="b" style="left:61px;top:1938.5px;" width="17" height="17" viewBox="0 0 17 17"><rect x="1" y="1" width="15" height="15" fill="#f9f9f9" stroke="#848484" stroke-width="1.600"/><path d="M4.500 8.500h8" stroke="#223a70" stroke-width="1.800"/><path d="M8.500 4.500v8" stroke="#223a70" stroke-width="1.800"/></svg>
<div class="b" style="left:80px;top:1946px;width:18px;height:2px;background-image:repeating-linear-gradient(90deg,#8a8a8a 0 2px,transparent 2px 5px);"></div>
<span class="t" style="top:1930px;font-size:24px;line-height:34px;color:#000;left:105px;letter-spacing:0.645px;">S101 - Framing Plans</span>
<svg class="b" style="left:61px;top:1981.1px;" width="17" height="17" viewBox="0 0 17 17"><rect x="1" y="1" width="15" height="15" fill="#f9f9f9" stroke="#848484" stroke-width="1.600"/><path d="M4.500 8.500h8" stroke="#223a70" stroke-width="1.800"/><path d="M8.500 4.500v8" stroke="#223a70" stroke-width="1.800"/></svg>
<div class="b" style="left:80px;top:1988.6px;width:18px;height:2px;background-image:repeating-linear-gradient(90deg,#8a8a8a 0 2px,transparent 2px 5px);"></div>
<span class="t lat" style="top:1972.6px;font-size:24px;line-height:34px;color:#000;left:105px;">S201 - Upper House Framing Details</span>
<svg class="b" style="left:61px;top:2023.7px;" width="17" height="17" viewBox="0 0 17 17"><rect x="1" y="1" width="15" height="15" fill="#f9f9f9" stroke="#848484" stroke-width="1.600"/><path d="M4.500 8.500h8" stroke="#223a70" stroke-width="1.800"/><path d="M8.500 4.500v8" stroke="#223a70" stroke-width="1.800"/></svg>
<div class="b" style="left:80px;top:2031.2px;width:18px;height:2px;background-image:repeating-linear-gradient(90deg,#8a8a8a 0 2px,transparent 2px 5px);"></div>
<span class="t" style="top:2015.2px;font-size:24px;line-height:34px;color:#000;left:105px;letter-spacing:1.007px;">S202 - Wall Section</span>
<svg class="b" style="left:61px;top:2066.3px;" width="17" height="17" viewBox="0 0 17 17"><rect x="1" y="1" width="15" height="15" fill="#f9f9f9" stroke="#848484" stroke-width="1.600"/><path d="M4.500 8.500h8" stroke="#223a70" stroke-width="1.800"/><path d="M8.500 4.500v8" stroke="#223a70" stroke-width="1.800"/></svg>
<div class="b" style="left:80px;top:2073.8px;width:18px;height:2px;background-image:repeating-linear-gradient(90deg,#8a8a8a 0 2px,transparent 2px 5px);"></div>
<span class="t lat" style="top:2057.8px;font-size:24px;line-height:34px;color:#000;left:105px;">S301 - Building Sections</span></div></div>
<div class="b" style="left:419px;top:1286px;width:32px;height:777px;background:#ffffff;"></div>
<svg class="b" style="left:427px;top:2038px;" width="16" height="12" viewBox="0 0 16 12"><path d="M1.500 1.500l6.500 7l6.500-7" fill="none" stroke="#444" stroke-width="3.400"/></svg>
<div class="b" style="left:12px;top:2063px;width:439px;height:35px;background:#f4f4f4;"></div>
<div class="b" style="left:47px;top:2064px;width:228px;height:33px;background:#d9d9d9;"></div>
<svg class="b" style="left:22px;top:2072px;" width="12" height="16" viewBox="0 0 12 16"><path d="M10 1.500l-7 6.500l7 6.500" fill="none" stroke="#444" stroke-width="3.400"/></svg>
<svg class="b" style="left:397px;top:2072px;" width="12" height="16" viewBox="0 0 12 16"><path d="M2 1.500l7 6.500l-7 6.500" fill="none" stroke="#444" stroke-width="3.400"/></svg>
<div class="b" style="left:461px;top:359px;width:3373px;height:1739px;background:#ffffff;"></div>
<div class="b" style="left:461px;top:359px;width:3373px;height:4px;background:#7d7d7d;"></div>
<div class="b" style="left:461px;top:359px;width:4px;height:1739px;background:#7d7d7d;"></div>
<div class="b" style="left:3801px;top:363px;width:33px;height:1698px;background:#f7f7f7;"></div>
<svg class="b" style="left:3807px;top:376px;" width="16" height="12" viewBox="0 0 16 12"><path d="M1.500 10.500l6.500-7l6.500 7" fill="none" stroke="#444" stroke-width="3.400"/></svg>
<svg class="b" style="left:3807px;top:2036px;" width="16" height="12" viewBox="0 0 16 12"><path d="M1.500 1.500l6.500 7l6.500-7" fill="none" stroke="#444" stroke-width="3.400"/></svg>
<div class="b" style="left:3804px;top:1196px;width:28px;height:34px;background:#dcdcdc;"></div>
<div class="b" style="left:3694px;top:392px;width:25px;height:9px;background:#f2f2f2;border:2px solid #333;box-sizing:border-box;"></div>
<svg class="b" style="left:3731px;top:381px;" width="24" height="24" viewBox="0 0 24 24"><path d="M6 6V2h16v16h-4" fill="#e9e9e9" stroke="#333" stroke-width="2"/><rect x="1.500" y="6" width="16" height="16" fill="#f4f4f4" stroke="#333" stroke-width="2"/><rect x="7" y="11" width="5" height="7" fill="none" stroke="#333" stroke-width="1.600"/></svg>
<svg class="b" style="left:3767px;top:383px;" width="22" height="21" viewBox="0 0 22 21"><path d="M2 2h5l4 5l4-5h5l-6 8.500l6 8.500h-5l-4-5l-4 5H2l6-8.500z" fill="#f2f2f2" stroke="#333" stroke-width="2" stroke-linejoin="round"/></svg>
<div class="b" style="left:3726px;top:424px;width:70px;height:249px;background:rgba(236,236,236,.55);border:3px solid #c9c9c9;border-radius:11px;box-sizing:border-box;"></div>
<svg class="b" style="left:3773px;top:430px;" width="17" height="17" viewBox="0 0 17 17"><circle cx="8.500" cy="8.500" r="7" fill="#e4e4e4" stroke="#bdbdbd" stroke-width="2"/><path d="M5.500 5.500l6 6M11.500 5.500l-6 6" stroke="#bdbdbd" stroke-width="1.600"/></svg>
<svg class="b" style="left:3736px;top:468px;" width="50" height="52" viewBox="0 0 50 52"><path d="M20 2h14a4 4 0 0 1 4 4v26a6 6 0 0 1-6 6H20a18 18 0 0 1 0-36z" fill="#e6e6e6" stroke="#c3c3c3" stroke-width="2.400"/><circle cx="20" cy="21" r="9" fill="#f1f1f1" stroke="#c3c3c3" stroke-width="2.400"/><path d="M13 28L5 36M27 28l6 8" stroke="#c3c3c3" stroke-width="2.400"/></svg>
<span class="t" style="top:498px;font-size:17px;line-height:24px;color:#6f9bd1;left:3761px;font-weight:700;letter-spacing:-1px;">2D</span>
<svg class="b" style="left:3755px;top:531px;" width="11" height="7" viewBox="0 0 11 7"><path d="M0 0h11l-5.500 7z" fill="#b4b4b4"/></svg>
<div class="b" style="left:3735px;top:546px;width:52px;height:2px;background:#c9c9c9;"></div>
<div class="b" style="left:3745px;top:566px;width:22px;height:22px;background:#cfe0b9;border:1px solid #b9cf9c;box-sizing:border-box;"></div>
<svg class="b" style="left:3757px;top:578px;" width="22" height="24" viewBox="0 0 22 24"><circle cx="8" cy="8" r="6" fill="#ededed" stroke="#c0c0c0" stroke-width="2.400"/><path d="M12 13l7 9" stroke="#bdbdbd" stroke-width="3.400"/></svg>
<svg class="b" style="left:3755px;top:621px;" width="11" height="7" viewBox="0 0 11 7"><path d="M0 0h11l-5.500 7z" fill="#b4b4b4"/></svg>
<svg class="b" style="left:3773px;top:648px;" width="17" height="17" viewBox="0 0 17 17"><circle cx="8.500" cy="8.500" r="7" fill="#e4e4e4" stroke="#bdbdbd" stroke-width="2"/><path d="M4.500 8.500h8" stroke="#bdbdbd" stroke-width="2.400"/></svg>
<div class="b" style="left:1093px;top:1700px;width:2077px;height:283px;border:3px solid #000;border-top:none;box-sizing:border-box;"></div>
<span class="t" style="top:1955.5px;font-size:41px;line-height:57px;color:#cfcfcf;left:3300px;letter-spacing:0.928px;">激活 Windows</span>
<span class="t" style="top:2013px;font-size:30px;line-height:42px;color:#cfcfcf;left:3300px;letter-spacing:1.166px;">转到“设置”以激活 Windows。</span>
<div class="b" style="left:465px;top:2061px;width:3369px;height:37px;background:#f2f2f2;"></div>
<div class="b" style="left:465px;top:2061px;width:86px;height:2px;background:#fafafa;"></div>
<svg class="b" style="left:467px;top:2066px;" width="34" height="26" viewBox="0 0 34 26"><path d="M2 6c4-4 8-3 10 2l3 8c2 4 6 5 10 3c4-2 6-6 5-10" fill="none" stroke="#2a2a2a" stroke-width="2"/><ellipse cx="21" cy="16" rx="9" ry="6" transform="rotate(-20 21 16)" fill="#f4f4f4" stroke="#2a2a2a" stroke-width="2"/></svg>
<svg class="b" style="left:518px;top:2068px;" width="16" height="24" viewBox="0 0 16 24"><circle cx="8" cy="8" r="6" fill="#f2f6fb" stroke="#2f7bd0" stroke-width="2.400"/><rect x="5" y="14" width="6" height="7" fill="#2f7bd0"/><path d="M8 5v5" stroke="#2f7bd0" stroke-width="1.600"/></svg>
<svg class="b" style="left:559px;top:2072px;" width="14" height="16" viewBox="0 0 14 16"><path d="M12 1.500l-8 6.500l8 6.500" fill="none" stroke="#333" stroke-width="3.600"/></svg>
<div class="b" style="left:2157px;top:2063px;width:34px;height:33px;background:#dadada;"></div>
<svg class="b" style="left:3774px;top:2072px;" width="14" height="16" viewBox="0 0 14 16"><path d="M2 1.500l8 6.500l-8 6.500" fill="none" stroke="#333" stroke-width="3.600"/></svg>
<svg class="b" style="left:3808px;top:2072px;" width="22" height="22" viewBox="0 0 22 22"><path d="M16 2h4v4h-4zM16 9h4v4h-4zM9 9h4v4H9zM16 16h4v4h-4zM9 16h4v4H9zM2 16h4v4H2z" fill="#bcbcbc"/></svg>
<div class="b" style="left:8px;top:2098px;width:3826px;height:3px;background:#bdbdbd;"></div>
<span class="t" style="top:2111px;font-size:24px;line-height:34px;color:#000;left:12px;letter-spacing:0.471px;">单击可进行选择; 按 Tab 键并单击可选择其他项目; 按 Ctrl 键并单击可将新项目添加到选择集; 按 Shift 键并单击可取消选择。</span>
<svg class="b" style="left:1834px;top:2111px;" width="36" height="36" viewBox="0 0 36 36"><path d="M3 33V18l7-4l7 4v15zM14 16V8l6-5l7 5v25h-10" fill="#b4b4b4" stroke="#a0a0a0" stroke-width="2"/><circle cx="26" cy="24" r="6" fill="#b0b0b0" stroke="#a0a0a0" stroke-width="2"/></svg>
<div class="b" style="left:1884px;top:2109px;width:413px;height:38px;background:#fefefe;border:2px solid #e9e9e9;box-sizing:border-box;"></div>
<div class="b" style="left:2260px;top:2111px;width:2px;height:34px;background:#d9d9d9;"></div>
<svg class="b" style="left:2271px;top:2123px;" width="18" height="12" viewBox="0 0 18 12"><path d="M1.500 1.500l7.500 8l7.500-8" fill="none" stroke="#c2c2c2" stroke-width="2"/></svg>
<svg class="b" style="left:2314px;top:2110px;" width="34" height="36" viewBox="0 0 34 36"><path d="M10 3h20v12H18l-6 8v-8h-2z" fill="#dcdcdc" stroke="#9a9a9a" stroke-width="2.400" stroke-linejoin="round"/><path d="M2 34c0-7 3-10 8-10s8 3 8 10z" fill="#9a9a9a"/><circle cx="10" cy="19" r="4" fill="#9a9a9a"/></svg>
<span class="t" style="top:2111px;font-size:24px;line-height:34px;color:#222;left:2356px;letter-spacing:-1.508px;">:0</span>
<svg class="b" style="left:2422px;top:2110px;" width="34" height="36" viewBox="0 0 34 36"><rect x="2" y="2" width="30" height="32" rx="3" fill="#f4f4f4" stroke="#222" stroke-width="2.400"/><rect x="2" y="2" width="30" height="7" fill="#222"/><path d="M8 16h4M15 16h12M8 22h4M15 22h12M8 28h4M15 28h12" stroke="#222" stroke-width="2.400"/></svg>
<svg class="b" style="left:2475px;top:2110px;" width="34" height="36" viewBox="0 0 34 36"><rect x="8" y="2" width="24" height="26" fill="#bdbdbd"/><path d="M2 24h12v-6l10 9l-10 9v-6H2z" fill="#a9a9a9" stroke="#9a9a9a" stroke-width="1.500"/></svg>
<div class="b" style="left:2522px;top:2109px;width:415px;height:38px;background:#fefefe;border:2px solid #e9e9e9;box-sizing:border-box;"></div>
<span class="t" style="top:2111px;font-size:24px;line-height:34px;color:#000;left:2530px;">主模型</span>
<div class="b" style="left:2899px;top:2111px;width:2px;height:34px;background:#d9d9d9;"></div>
<svg class="b" style="left:2911px;top:2123px;" width="18" height="12" viewBox="0 0 18 12"><path d="M1.500 1.500l7.500 8l7.500-8" fill="none" stroke="#222" stroke-width="2"/></svg>
<div class="b" style="left:2954px;top:2113px;width:30px;height:30px;background:#f6f6f6;border:3px solid #3f3f3f;box-sizing:border-box;"></div>
<svg class="b" style="left:2959px;top:2118px;" width="20" height="20" viewBox="0 0 20 20"><path d="M2 10l6 7L18 3" fill="none" stroke="#6a9a3a" stroke-width="4"/></svg>
<span class="t" style="top:2111px;font-size:24px;line-height:34px;color:#000;left:2990px;">排除选项</span>
<svg class="b" style="left:3300px;top:2111px;" width="40" height="40" viewBox="0 0 40 40"><rect x="2" y="3.500" width="17" height="11" rx="5" fill="none" stroke="#d4a017" stroke-width="4"/><rect x="15" y="3.500" width="17" height="11" rx="5" fill="none" stroke="#d4a017" stroke-width="4"/><path d="M10 9h14" stroke="#b8860b" stroke-width="3"/><path transform="translate(12 9) scale(1.0)" d="M0 0v18l4.200-4l3.400 7.600l3.200-1.400l-3.400-7.400h6z" fill="#f4f4f4" stroke="#1a1a1a" stroke-width="1.700" stroke-linejoin="round"/></svg>
<svg class="b" style="left:3351px;top:2109px;" width="40" height="42" viewBox="0 0 40 42"><path d="M3 18L18 4v24z" fill="#d5dde6"/><path d="M3 18h14M5 23.500h13M1 29h17M3 18L17 5" stroke="#2f6fb5" stroke-width="2.400" fill="none"/><path d="M20 1l11 11M31 1l-11 11" stroke="#c0392b" stroke-width="4"/><path transform="translate(20 15) scale(1.0)" d="M0 0v18l4.200-4l3.400 7.600l3.200-1.400l-3.400-7.400h6z" fill="#f4f4f4" stroke="#1a1a1a" stroke-width="1.700" stroke-linejoin="round"/></svg>
<svg class="b" style="left:3405px;top:2110px;" width="40" height="42" viewBox="0 0 40 42"><rect x="3" y="1" width="16" height="5" fill="#e7b98a" stroke="#9a4a1c" stroke-width="1.600"/><path d="M5 6h12l-1 9H6z" fill="#f1cda3" stroke="#9a4a1c" stroke-width="1.600"/><rect x="1" y="15" width="20" height="5" fill="#e7b98a" stroke="#9a4a1c" stroke-width="1.600"/><path d="M10.500 20v12" stroke="#222" stroke-width="2"/><path transform="translate(18 10) scale(1.0)" d="M0 0v18l4.200-4l3.400 7.600l3.200-1.400l-3.400-7.400h6z" fill="#f4f4f4" stroke="#1a1a1a" stroke-width="1.700" stroke-linejoin="round"/></svg>
<svg class="b" style="left:3459px;top:2109px;" width="40" height="42" viewBox="0 0 40 42"><path d="M2 8l12-4v24l-12 4z" fill="#9dbbd8" stroke="#2f6fb5" stroke-width="2.200" stroke-linejoin="round"/><path d="M18 1l11 11M29 1l-11 11" stroke="#c0392b" stroke-width="4"/><path transform="translate(16 15) scale(1.0)" d="M0 0v18l4.200-4l3.400 7.600l3.200-1.400l-3.400-7.400h6z" fill="#f4f4f4" stroke="#1a1a1a" stroke-width="1.700" stroke-linejoin="round"/></svg>
<svg class="b" style="left:3510px;top:2110px;" width="40" height="42" viewBox="0 0 40 42"><path d="M1 9.500h15M8.500 2v15" stroke="#111" stroke-width="2.200"/><path d="M0 9.500l3.500-3v6zM17 9.500l-3.500-3v6zM8.500 1l-3 3.500h6zM8.500 18l-3-3.500h6z" fill="#111"/><path transform="translate(15 5) scale(1.15)" d="M0 0v18l4.200-4l3.400 7.600l3.200-1.400l-3.400-7.400h6z" fill="#f4f4f4" stroke="#1a1a1a" stroke-width="1.700" stroke-linejoin="round"/></svg>
<svg class="b" style="left:3562px;top:2112px;" width="34" height="34" viewBox="0 0 34 34"><circle cx="17" cy="17" r="10.500" fill="none" stroke="#c4c4c4" stroke-width="7"/><circle cx="17" cy="17" r="10.500" fill="none" stroke="#b2b2b2" stroke-width="7" stroke-dasharray="3 5.200"/></svg>
<svg class="b" style="left:3608px;top:2114px;" width="36" height="32" viewBox="0 0 36 32"><defs><linearGradient id="fg" x1="0" x2="1"><stop offset="0" stop-color="#a8a8a8"/><stop offset=".5" stop-color="#ececec"/><stop offset="1" stop-color="#a0a0a0"/></linearGradient></defs><path d="M1.500 2h33v3L22 19v10h-8V19L1.500 5z" fill="url(#fg)" stroke="#555" stroke-width="1.800" stroke-linejoin="round"/><path d="M1.500 2.500h33" stroke="#3a3a3a" stroke-width="2.600"/></svg>
<span class="t" style="top:2113px;font-size:26px;line-height:36px;color:#000;left:3645px;letter-spacing:-1.344px;">:0</span>
<svg class="b" style="left:3812px;top:2128px;" width="22" height="22" viewBox="0 0 22 22"><path d="M16 2h4v4h-4zM16 9h4v4h-4zM9 9h4v4H9zM16 16h4v4h-4zM9 16h4v4H9zM2 16h4v4H2z" fill="#bcbcbc"/></svg>
</div>
<div id="mask"></div>
<svg width="0" height="0" style="position:absolute"><symbol id="ld" viewBox="0 0 1932 1449">
<g stroke="#000" stroke-width="20" stroke-linejoin="round" fill="#ffe600">
<path d="M195 430l110-40l400 160l300 20l60 140l-260 150l-210-50l-290-170l-115-110z" fill="#000"/>
<ellipse cx="1295" cy="690" rx="108" ry="128" fill="#4a4a4a" transform="rotate(-22 1295 690)"/>
<ellipse cx="1295" cy="690" rx="98" ry="118" fill="none" stroke-width="36" stroke-dasharray="24 18" transform="rotate(-22 1295 690)"/>
<ellipse cx="1300" cy="700" rx="50" ry="62" fill="none" stroke-width="16" stroke-dasharray="14 16" transform="rotate(-22 1300 700)"/>
<path d="M112 455l75-52l35 15v85l-60 5z"/>
<path d="M185 395l40 20v70l45 130l-60-25l-25-110z" fill="#000"/>
<path d="M222 240L447 108l243 124L505 347z"/>
<path d="M330 243L520 135" fill="none" stroke-width="8" stroke="#c9a800"/>
<path d="M222 240l283 107v215l-90-35l-60-80l-80 10l-53-25z" fill="#fbe100"/>
<path d="M505 347l185-115l-5 175l-45 150l-135 15z" fill="#f2d400"/>
<path d="M505 347L690 232" fill="none" stroke="#c98a00" stroke-width="14"/>
<ellipse cx="462" cy="668" rx="104" ry="130" fill="#3c3c3c" transform="rotate(-18 462 668)"/>
<ellipse cx="462" cy="668" rx="96" ry="122" fill="none" stroke-width="30" stroke-dasharray="22 18" transform="rotate(-18 462 668)"/>
<ellipse cx="428" cy="662" rx="110" ry="132" fill="#4a4a4a" transform="rotate(-18 428 662)"/>
<ellipse cx="428" cy="662" rx="100" ry="121" fill="none" stroke-width="36" stroke-dasharray="24 18" transform="rotate(-18 428 662)"/>
<circle cx="412" cy="662" r="42" fill="#ffe600" stroke-width="22"/>
<path d="M590 480l60 30v330l-60-30z" />
<path d="M650 560l150 70l130-80l40 50l-120 110l-40 130l-160-50z"/>
<path d="M680 590l50 25v140l-50-25zM755 635l45 22v100l-45-22zM610 560l25 12v90l-25-12zM610 700l25 12v90l-25-12z" fill="#000" stroke="none"/>
<path d="M640 305L830 195l132 76L770 386z"/>
<path d="M640 305l130 81v186l-130-77z" fill="#15225c"/>
<path d="M652 372l40 24v80l-40-24z" fill="#5d6a78" stroke-width="6"/>
<path d="M770 386l192-115v165L770 572z" fill="#1b3186"/>
<path d="M892 343l40-23v95l-40 23z" fill="#a9b48f" stroke-width="5"/>
<path d="M770 572l192-136v110L810 650z" fill="#101010"/>
<path d="M780 380l175-105" fill="none" stroke-width="22" stroke-dasharray="12 14"/>
<path d="M700 205l55-70l50 25l-25 55M760 135l-25 65" fill="none" stroke-width="13"/>
<path d="M985 290l75 20l-10 75l-45-5zM1000 400l70 20l-20 60l-50-20z" fill="#fff" stroke-width="13"/>
<path d="M1150 565l85-58l62 42l-90 62z"/>
<path d="M1000 510l300 200l-40 60l-300-200z"/>
<ellipse cx="935" cy="915" rx="136" ry="148" fill="#4a4a4a" transform="rotate(-18 935 915)"/>
<ellipse cx="935" cy="915" rx="124" ry="136" fill="none" stroke-width="38" stroke-dasharray="26 20" transform="rotate(-18 935 915)"/>
<circle cx="890" cy="920" r="46" fill="#ffe600" stroke-width="22"/>
<path d="M800 770l130-85l110 60l-150 95z"/>
<path d="M935 600l70-88l555 388l-80 112z"/>
<path d="M975 560l545 378M1060 690l380 260M1010 625l470 325" fill="none" stroke-width="11"/>
<path d="M1200 690l120 85" fill="none" stroke="#fff" stroke-width="12"/>
<path d="M1090 850l80-40l170 130l-50 80z" fill="#000"/>
<path d="M1180 900l170 120l-50 90l-160-120z"/>
<path d="M1400 870l85-72l62 150l-85 60z" fill="#fff"/>
<path d="M1330 935l120-72l45 175l-115 65z"/>
<path d="M1370 920l40 170M1415 895l40 170" fill="none" stroke-width="12"/>
<path d="M1280 1165L1690 897l95 10l47 203l-392 226l-137-82z"/>
<path d="M1385 1095l400-185M1440 1333l-32-195M1560 1258l-32-190M1680 1192l-35-192M1300 1250l-20-85l105-70M1380 1100l50 30l360-180" fill="none" stroke-width="14"/>
<path d="M1300 1255l140 85l395-228" fill="none" stroke-width="30" stroke-dasharray="26 14"/>
<path d="M1290 1170l30 80l110 70" fill="none" stroke-width="26"/>
</g>
<g fill="#0a0a0a"><rect x="545" y="150" width="58" height="122" rx="14"/><ellipse cx="497" cy="222" rx="32" ry="25"/>
<path d="M290 395l70-45l120 65l-20 75l-60-40l-40 60l-60-30zM470 420l65 30l-10 120l-55-45zM520 600l60 20v160l-60-30zM225 430l70 30l20 60l-90-30z"/></g>
<g fill="#ffe600"><path d="M335 405l55-30l14 20l-48 36zM410 425l30 15l-10 40l-25-15zM440 650l-30 30l-25-10l20-30zM915 905l-30 35l-28-12l22-32z"/></g>
<g fill="#0a0a0a"><circle cx="412" cy="662" r="14"/><circle cx="890" cy="920" r="15"/></g>
</symbol></svg>
<div id="modal">
<div class="b" style="left:292px;top:0px;width:176px;height:6px;background:#3381ff;"></div>
<span class="t" style="top:38px;font-size:28px;line-height:39px;color:#1d2129;left:-856px;width:2000px;text-align:center;">公共资源</span>
<span class="t" style="top:38px;font-size:28px;line-height:39px;color:#3381ff;left:-620px;width:2000px;text-align:center;">专题</span>
<span class="t" style="top:38px;font-size:28px;line-height:39px;color:#4e5969;left:-384px;width:2000px;text-align:center;">企业空间</span>
<span class="t" style="top:38px;font-size:28px;line-height:39px;color:#4e5969;left:-148px;width:2000px;text-align:center;">个人空间</span>
<span class="t" style="top:38px;font-size:28px;line-height:39px;color:#4e5969;left:88px;width:2000px;text-align:center;">插件下载</span>
<svg class="b" style="left:2987px;top:40px;" width="28" height="28" viewBox="0 0 28 28"><path d="M2.500 2.500l23 23M25.500 2.500l-23 23" stroke="#1d2129" stroke-width="3.400" fill="none"/></svg>
<span class="t" style="top:149.5px;font-size:28px;line-height:39px;color:#3381ff;left:-872px;width:2000px;text-align:center;font-weight:500;">最新专题</span>
<span class="t" style="top:149.5px;font-size:28px;line-height:39px;color:#1d2129;left:-679.5px;width:2000px;text-align:center;font-weight:300;">热门专题</span>
<div class="b" style="left:92px;top:208px;width:72px;height:4px;background:#3381ff;border-radius:2px;"></div>
<div class="b" style="left:56px;top:212px;width:2960px;height:2px;background:#e5e6eb;"></div>
<div class="b" style="left:56px;top:254px;width:510px;height:72px;background:#f2f3f8;border-radius:8px;"></div>
<svg class="b" style="left:78px;top:275px;" width="36" height="36" viewBox="0 0 36 36"><circle cx="16" cy="15" r="12" fill="none" stroke="#7b8798" stroke-width="2.400"/><path d="M24.500 24.500l8 8" stroke="#7b8798" stroke-width="2.400" stroke-linecap="round"/></svg>
<span class="t" style="top:271.5px;font-size:28px;line-height:39px;color:#bfc4cf;left:141px;">搜索关键词</span>
<span class="t" style="top:273px;font-size:28px;line-height:39px;color:#1d2129;right:55px;letter-spacing:.7px;">共100篇专题</span>
<div class="card hov" style="left:56px;top:366px"><svg class="b" style="left:26px;top:68px" width="180" height="135"><use href="#ld"/></svg><svg class="b" style="left:246px;top:68px" width="180" height="135"><use href="#ld"/></svg><svg class="b" style="left:26px;top:290px" width="180" height="135"><use href="#ld"/></svg><svg class="b" style="left:246px;top:290px" width="180" height="135"><use href="#ld"/></svg><div class="cf"><span class="ct">施工场地布置合集</span><span class="cn">65</span></div><svg class="b" style="left:400px;top:19px" width="40" height="38" viewBox="0 0 40 38"><path d="M20 3.500l5.100 10.400l11.400 1.600l-8.300 8l2 11.400L20 29.500l-10.200 5.400l2-11.400l-8.300-8l11.400-1.600z" fill="none" stroke="#6b7785" stroke-width="2.600" stroke-linejoin="round"/></svg></div>
<div class="card" style="left:556px;top:366px"><svg class="b" style="left:26px;top:68px" width="180" height="135"><use href="#ld"/></svg><svg class="b" style="left:246px;top:68px" width="180" height="135"><use href="#ld"/></svg><svg class="b" style="left:26px;top:290px" width="180" height="135"><use href="#ld"/></svg><svg class="b" style="left:246px;top:290px" width="180" height="135"><use href="#ld"/></svg><div class="cf"><span class="ct">施工场地布置合集</span><span class="cn">65</span></div></div>
<div class="card" style="left:1056px;top:366px"><svg class="b" style="left:26px;top:68px" width="180" height="135"><use href="#ld"/></svg><svg class="b" style="left:246px;top:68px" width="180" height="135"><use href="#ld"/></svg><svg class="b" style="left:26px;top:290px" width="180" height="135"><use href="#ld"/></svg><svg class="b" style="left:246px;top:290px" width="180" height="135"><use href="#ld"/></svg><div class="cf"><span class="ct">施工场地布置合集</span><span class="cn">65</span></div></div>
<div class="card" style="left:1556px;top:366px"><svg class="b" style="left:26px;top:68px" width="180" height="135"><use href="#ld"/></svg><svg class="b" style="left:246px;top:68px" width="180" height="135"><use href="#ld"/></svg><svg class="b" style="left:26px;top:290px" width="180" height="135"><use href="#ld"/></svg><svg class="b" style="left:246px;top:290px" width="180" height="135"><use href="#ld"/></svg><div class="cf"><span class="ct">施工场地布置合集</span><span class="cn">65</span></div></div>
<div class="card" style="left:2056px;top:366px"><svg class="b" style="left:26px;top:68px" width="180" height="135"><use href="#ld"/></svg><svg class="b" style="left:246px;top:68px" width="180" height="135"><use href="#ld"/></svg><svg class="b" style="left:26px;top:290px" width="180" height="135"><use href="#ld"/></svg><svg class="b" style="left:246px;top:290px" width="180" height="135"><use href="#ld"/></svg><div class="cf"><span class="ct">施工场地布置合集</span><span class="cn">65</span></div></div>
<div class="card" style="left:2556px;top:366px"><svg class="b" style="left:26px;top:68px" width="180" height="135"><use href="#ld"/></svg><svg class="b" style="left:246px;top:68px" width="180" height="135"><use href="#ld"/></svg><svg class="b" style="left:26px;top:290px" width="180" height="135"><use href="#ld"/></svg><svg class="b" style="left:246px;top:290px" width="180" height="135"><use href="#ld"/></svg><div class="cf"><span class="ct">施工场地布置合集</span><span class="cn">65</span></div></div>
<div class="card" style="left:56px;top:950px"><svg class="b" style="left:26px;top:68px" width="180" height="135"><use href="#ld"/></svg><svg class="b" style="left:246px;top:68px" width="180" height="135"><use href="#ld"/></svg><svg class="b" style="left:26px;top:290px" width="180" height="135"><use href="#ld"/></svg><svg class="b" style="left:246px;top:290px" width="180" height="135"><use href="#ld"/></svg><div class="cf"><span class="ct">施工场地布置合集</span><span class="cn">65</span></div></div>
<div class="card" style="left:556px;top:950px"><svg class="b" style="left:26px;top:68px" width="180" height="135"><use href="#ld"/></svg><svg class="b" style="left:246px;top:68px" width="180" height="135"><use href="#ld"/></svg><svg class="b" style="left:26px;top:290px" width="180" height="135"><use href="#ld"/></svg><svg class="b" style="left:246px;top:290px" width="180" height="135"><use href="#ld"/></svg><div class="cf"><span class="ct">施工场地布置合集</span><span class="cn">65</span></div></div>
<div class="card" style="left:1056px;top:950px"><svg class="b" style="left:26px;top:68px" width="180" height="135"><use href="#ld"/></svg><svg class="b" style="left:246px;top:68px" width="180" height="135"><use href="#ld"/></svg><svg class="b" style="left:26px;top:290px" width="180" height="135"><use href="#ld"/></svg><svg class="b" style="left:246px;top:290px" width="180" height="135"><use href="#ld"/></svg><div class="cf"><span class="ct">施工场地布置合集</span><span class="cn">65</span></div></div>
<div class="card" style="left:1556px;top:950px"><svg class="b" style="left:26px;top:68px" width="180" height="135"><use href="#ld"/></svg><svg class="b" style="left:246px;top:68px" width="180" height="135"><use href="#ld"/></svg><svg class="b" style="left:26px;top:290px" width="180" height="135"><use href="#ld"/></svg><svg class="b" style="left:246px;top:290px" width="180" height="135"><use href="#ld"/></svg><div class="cf"><span class="ct">施工场地布置合集</span><span class="cn">65</span></div></div>
<div class="card" style="left:2056px;top:950px"><svg class="b" style="left:26px;top:68px" width="180" height="135"><use href="#ld"/></svg><svg class="b" style="left:246px;top:68px" width="180" height="135"><use href="#ld"/></svg><svg class="b" style="left:26px;top:290px" width="180" height="135"><use href="#ld"/></svg><svg class="b" style="left:246px;top:290px" width="180" height="135"><use href="#ld"/></svg><div class="cf"><span class="ct">施工场地布置合集</span><span class="cn">65</span></div></div>
<div class="card" style="left:2556px;top:950px"><svg class="b" style="left:26px;top:68px" width="180" height="135"><use href="#ld"/></svg><svg class="b" style="left:246px;top:68px" width="180" height="135"><use href="#ld"/></svg><svg class="b" style="left:26px;top:290px" width="180" height="135"><use href="#ld"/></svg><svg class="b" style="left:246px;top:290px" width="180" height="135"><use href="#ld"/></svg><div class="cf"><span class="ct">施工场地布置合集</span><span class="cn">65</span></div></div>
<svg class="b" style="left:482px;top:435px;" width="32" height="32" viewBox="0 0 32 32"><path d="M4 4l7 19l3.500-6.500l9 9l3-3l-9-9l6.500-3.500z" fill="#fff" stroke="#777" stroke-width="2.200" stroke-linejoin="miter"/><path d="M16 18l9.500 9.500l3-3L19 15z" fill="#777"/></svg>
<span class="t" style="top:1609px;font-size:28px;line-height:39px;color:#1d2129;left:1606px;letter-spacing:0.211px;">共32条</span>
<div class="pg" style="left:1728px;top:1594px"><svg width="22" height="32" viewBox="0 0 22 32" style="margin-top:14px"><path d="M16.500 6L6.500 16l10 10" fill="none" stroke="#1d2129" stroke-width="2"/></svg></div>
<div class="pg" style="left:1808px;top:1594px">1</div>
<div class="pg act" style="left:1888px;top:1594px">2</div>
<div class="pg" style="left:1968px;top:1594px">3</div>
<div class="pg" style="left:2048px;top:1594px">4</div>
<div class="pg" style="left:2128px;top:1594px">5</div>
<div class="pg" style="left:2208px;top:1594px">6</div>
<div class="pg" style="left:2288px;top:1594px">7</div>
<div class="pg" style="left:2368px;top:1594px">8</div>
<div class="pg" style="left:2448px;top:1594px">9</div>
<div class="pg" style="left:2528px;top:1594px"><svg width="22" height="32" viewBox="0 0 22 32" style="margin-top:14px"><path d="M5.500 6l10 10l-10 10" fill="none" stroke="#1d2129" stroke-width="2"/></svg></div>
<div class="pg" style="left:2624px;top:1594px;width:164px">5条/页</div>
<span class="t" style="top:1606.5px;font-size:28px;line-height:39px;color:#1d2129;left:2804px;">跳至</span>
<div class="pg" style="left:2876px;top:1594px;width:96px;text-align:left;padding-left:24px">5</div>
<span class="t" style="top:1603.5px;font-size:28px;line-height:39px;color:#1d2129;left:2988px;">页</span>
</div>
</body></html>
